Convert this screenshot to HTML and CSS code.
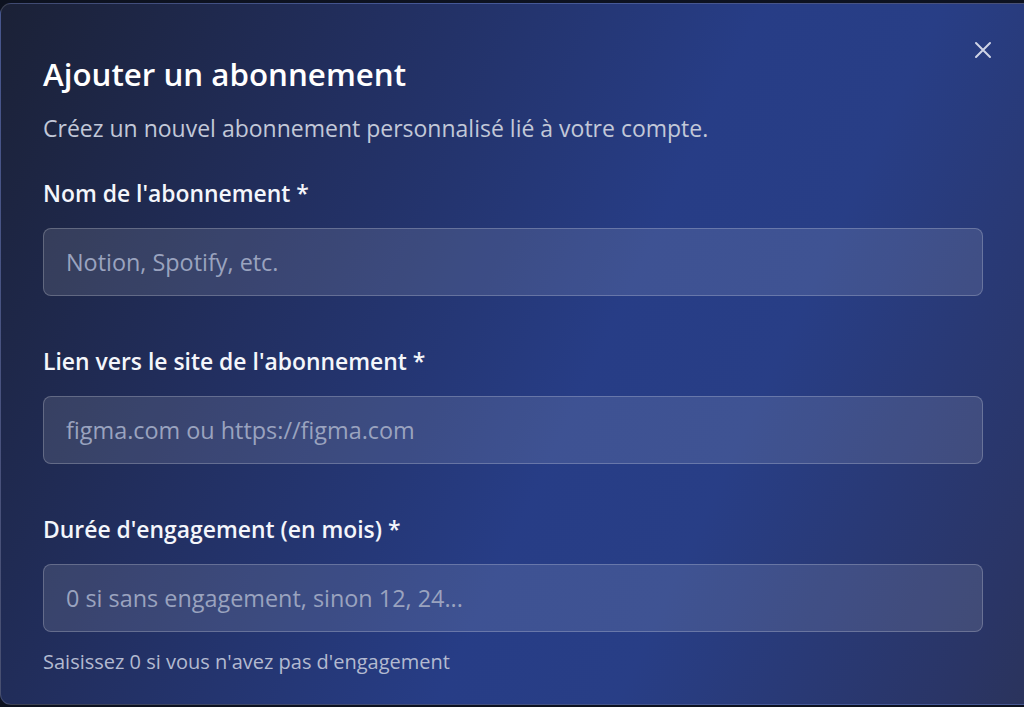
FILE: index.html
```html
<!DOCTYPE html>
<html lang="fr">
<head>
<meta charset="utf-8">
<title>Ajouter un abonnement</title>
<link rel="stylesheet" href="styles.css">
</head>
<body>
<div class="dialog">
  <button class="close" aria-label="Fermer">
    <svg width="18" height="18" viewBox="0 0 18 18"><path d="M2 2 L16 16 M16 2 L2 16" stroke="currentColor" stroke-width="2" stroke-linecap="round" fill="none"/></svg>
  </button>
  <h1 class="title">Ajouter un abonnement</h1>
  <p class="subtitle">Créez un nouvel abonnement personnalisé lié à votre compte.</p>
  <form class="form">
    <div class="field">
      <label class="label" for="nom">Nom de l'abonnement *</label>
      <input class="input" id="nom" type="text" placeholder="Notion, Spotify, etc.">
    </div>
    <div class="field">
      <label class="label" for="lien">Lien vers le site de l'abonnement *</label>
      <input class="input" id="lien" type="text" placeholder="figma.com ou https://figma.com">
    </div>
    <div class="field">
      <label class="label" for="duree">Durée d'engagement (en mois) *</label>
      <input class="input" id="duree" type="text" placeholder="0 si sans engagement, sinon 12, 24...">
      <p class="hint">Saisissez 0 si vous n'avez pas d'engagement</p>
    </div>
  </form>
</div>
</body>
</html>
```
FILE: styles.css
```css
html, body {
  margin: 0;
  padding: 0;
  height: 100%;
  overflow: hidden;
  background: #0d1220;
}
body {
  font-family: "Open Sans", "Noto Sans", sans-serif;
  padding-top: 3px;
  box-sizing: border-box;
}
.dialog {
  position: relative;
  box-sizing: border-box;
  width: 1060px;
  height: 702px;
  padding: 52px 0 0 42px;
  border: 1px solid rgba(255, 255, 255, 0.14);
  border-radius: 11px;
  background: linear-gradient(115deg, #1b2136 0%, #222f60 28%, #273d86 55%, #283e86 68%, #2a3566 92%, #2b3358 100%);
  color: #fff;
}
.close {
  position: absolute;
  left: 972px;
  top: 36px;
  width: 20px;
  height: 20px;
  padding: 0;
  margin: 0;
  border: 0;
  background: none;
  color: #cfd4e6;
  display: flex;
  align-items: center;
  justify-content: center;
}
.title {
  margin: 0;
  font-size: 31.3px;
  line-height: 36px;
  font-weight: 600;
  letter-spacing: 0;
  color: #ffffff;
}
.subtitle {
  margin: 22px 0 0;
  font-size: 23px;
  line-height: 28px;
  color: #c2c8d8;
}
.form {
  margin-top: 38px;
  width: 940px;
  display: flex;
  flex-direction: column;
  gap: 52px;
}
.field {
  display: flex;
  flex-direction: column;
}
.label {
  font-size: 22.9px;
  line-height: 28px;
  font-weight: 600;
  color: #f4f6fb;
  margin-bottom: 20px;
}
.input {
  box-sizing: border-box;
  height: 68px;
  width: 100%;
  padding: 0 22px;
  border: 1px solid rgba(255, 255, 255, 0.22);
  border-radius: 8px;
  background: rgba(255, 255, 255, 0.11);
  font-family: inherit;
  font-size: 23.4px;
  color: #fff;
  outline: none;
}
.input::placeholder {
  color: #9aa3bf;
}
.hint {
  margin: 19px 0 0;
  font-size: 20px;
  line-height: 22px;
  color: #b3bad0;
}
```
